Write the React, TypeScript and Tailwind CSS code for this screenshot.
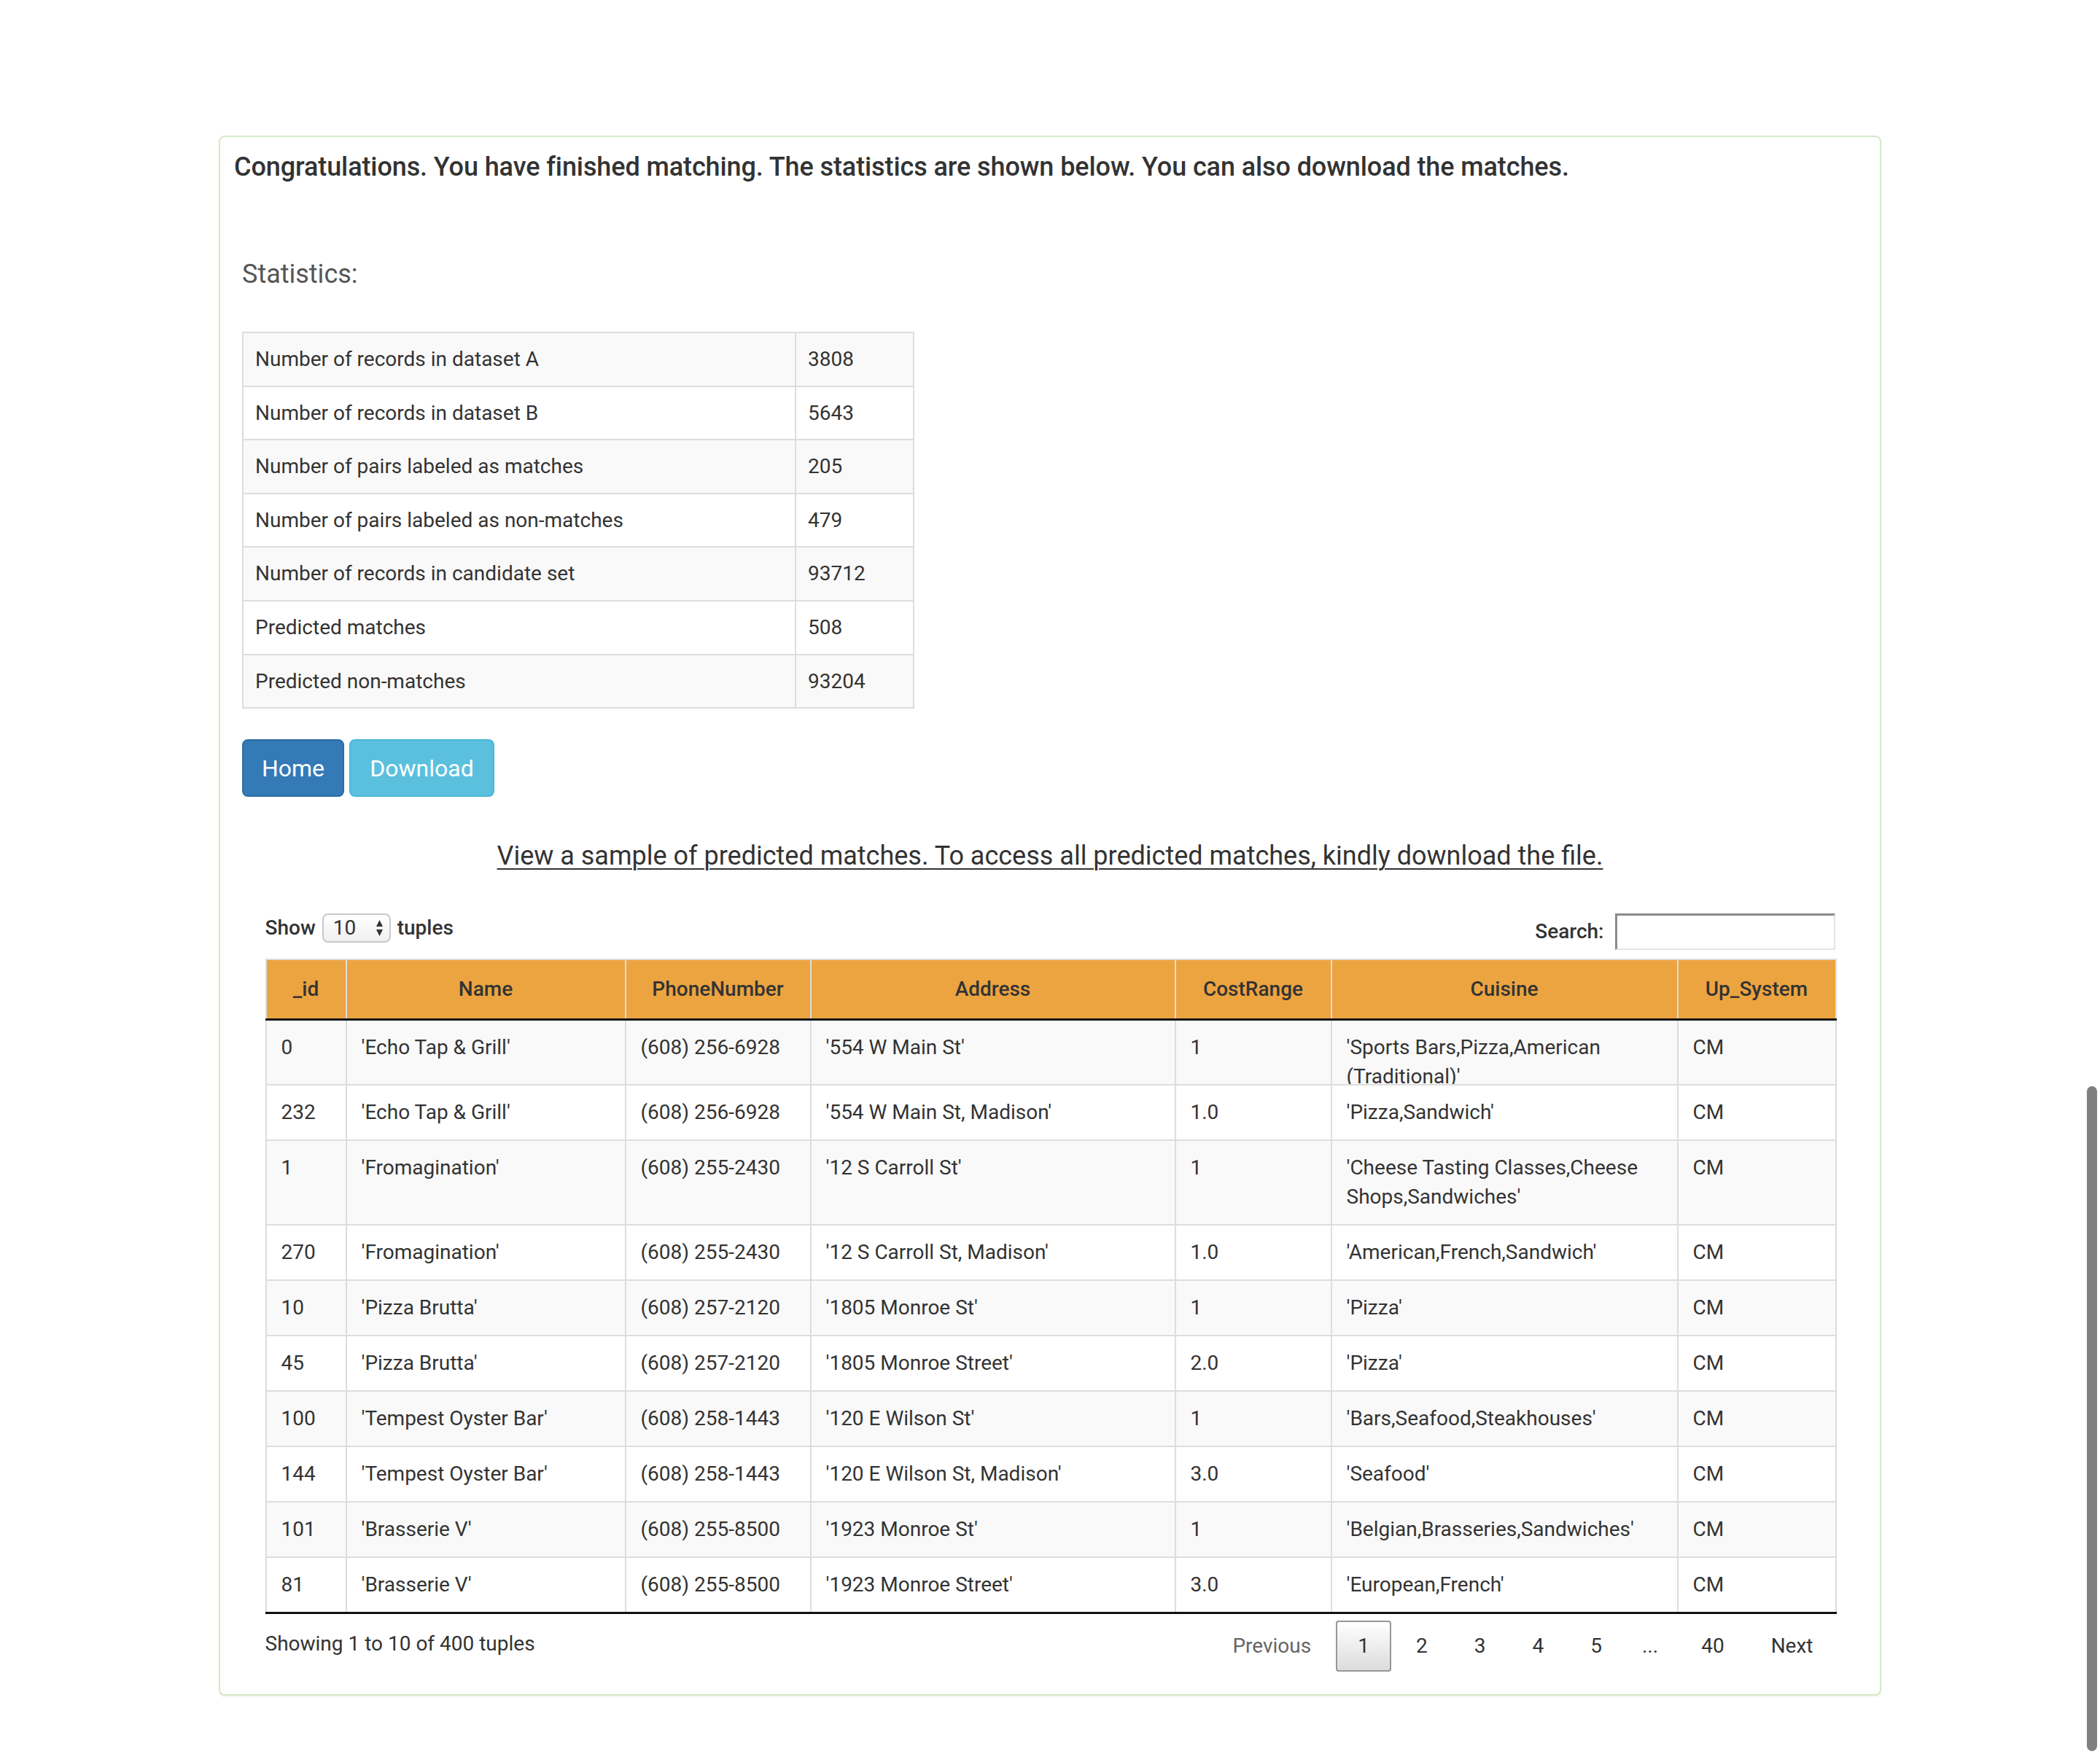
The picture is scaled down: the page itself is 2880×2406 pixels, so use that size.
import React from "react";

const stats: [string, string][] = [
  ["Number of records in dataset A", "3808"],
  ["Number of records in dataset B", "5643"],
  ["Number of pairs labeled as matches", "205"],
  ["Number of pairs labeled as non-matches", "479"],
  ["Number of records in candidate set", "93712"],
  ["Predicted matches", "508"],
  ["Predicted non-matches", "93204"],
];

const rows: string[][] = [
  ["0", "'Echo Tap & Grill'", "(608) 256-6928", "'554 W Main St'", "1", "'Sports Bars,Pizza,American (Traditional)'", "CM"],
  ["232", "'Echo Tap & Grill'", "(608) 256-6928", "'554 W Main St, Madison'", "1.0", "'Pizza,Sandwich'", "CM"],
  ["1", "'Fromagination'", "(608) 255-2430", "'12 S Carroll St'", "1", "'Cheese Tasting Classes,Cheese Shops,Sandwiches'", "CM"],
  ["270", "'Fromagination'", "(608) 255-2430", "'12 S Carroll St, Madison'", "1.0", "'American,French,Sandwich'", "CM"],
  ["10", "'Pizza Brutta'", "(608) 257-2120", "'1805 Monroe St'", "1", "'Pizza'", "CM"],
  ["45", "'Pizza Brutta'", "(608) 257-2120", "'1805 Monroe Street'", "2.0", "'Pizza'", "CM"],
  ["100", "'Tempest Oyster Bar'", "(608) 258-1443", "'120 E Wilson St'", "1", "'Bars,Seafood,Steakhouses'", "CM"],
  ["144", "'Tempest Oyster Bar'", "(608) 258-1443", "'120 E Wilson St, Madison'", "3.0", "'Seafood'", "CM"],
  ["101", "'Brasserie V'", "(608) 255-8500", "'1923 Monroe St'", "1", "'Belgian,Brasseries,Sandwiches'", "CM"],
  ["81", "'Brasserie V'", "(608) 255-8500", "'1923 Monroe Street'", "3.0", "'European,French'", "CM"],
];

const headers = ["_id", "Name", "PhoneNumber", "Address", "CostRange", "Cuisine", "Up_System"];
const widths = [110, 383, 254, 500, 214, 475, 217];

export default function App() {
  return (
    <div className="relative min-h-[2406px] bg-white font-['Roboto','Liberation_Sans',sans-serif] text-[#333]">
      <div className="w-[2280px] mx-auto pt-[186px]">
        <div className="border-2 border-[#d6e9c6] rounded-[8px] shadow-[0_2px_2px_rgba(0,0,0,0.05)] bg-white">
          <h4 className="mt-[21px] pl-[19px] text-[36px] leading-[40px] font-medium tracking-[-0.1px]">
            Congratulations. You have finished matching. The statistics are shown below. You can also download the matches.
          </h4>
          <div className="px-[30px] pb-[31px]">
            <div className="mt-[107px] text-[36px] leading-[40px] text-[#555]">Statistics:</div>
            <table className="mt-[59px] w-[920px] border-collapse text-[28px] leading-[39.6px] table-fixed">
              <colgroup>
                <col style={{ width: "758px" }} />
                <col style={{ width: "162px" }} />
              </colgroup>
              <tbody>
                {stats.map(([k, v], i) => (
                  <tr key={k} className={i % 2 === 0 ? "bg-[#f9f9f9]" : "bg-white"}>
                    <td className="border-2 border-[#ddd] p-[16px] text-left">{k}</td>
                    <td className="border-2 border-[#ddd] p-[16px] text-left">{v}</td>
                  </tr>
                ))}
              </tbody>
            </table>

            <div className="mt-[42px] flex">
              <button className="w-[140px] h-[79px] flex items-center justify-center rounded-[8px] border-2 border-[#2e6da4] bg-[#337ab7] text-white text-[32px] leading-[46px]">
                Home
              </button>
              <button className="ml-[7px] w-[199px] h-[79px] flex items-center justify-center rounded-[8px] border-2 border-[#46b8da] bg-[#5bc0de] text-white text-[32px] leading-[46px]">
                Download
              </button>
            </div>

            <div className="mt-[61px] text-center text-[36px] leading-[40px]">
              <a className="underline decoration-[2px] underline-offset-[5px] text-[#333]">
                View a sample of predicted matches. To access all predicted matches, kindly download the file.
              </a>
            </div>

            <div className="mt-[59px] w-[2153px] mx-auto text-[28px]">
              <div className="flex justify-between items-start h-[50px]">
                <div className="flex items-center h-[40px] leading-[40px] font-medium">
                  <span>Show</span>
                  <div className="mx-[9px] flex items-center justify-between w-[94px] h-[40px] pl-[13px] pr-[8px] border-2 border-[#c9c9c9] rounded-[8px] bg-linear-to-b from-white to-[#f0f0f0] font-normal">
                    <span>10</span>
                    <svg width="11" height="26" viewBox="0 0 11 26">
                      <path d="M5.5 2 L10 11 H1 Z" fill="#333" />
                      <path d="M5.5 24 L10 15 H1 Z" fill="#333" />
                    </svg>
                  </div>
                  <span>tuples</span>
                </div>
                <div className="flex items-center h-[50px] leading-[40px] font-medium">
                  <span>Search:</span>
                  <div className="ml-[15px] w-[302px] h-[50px] border-t-[3px] border-l-[3px] border-r-2 border-b-2 border-t-[#8a8a8a] border-l-[#8a8a8a] border-r-[#e3e3e3] border-b-[#e3e3e3] bg-white" />
                </div>
              </div>

              <table className="mt-[12px] w-[2153px] border-collapse table-fixed text-[28px] leading-[40px]">
                <colgroup>
                  {widths.map((w, i) => (
                    <col key={i} style={{ width: `${w}px` }} />
                  ))}
                </colgroup>
                <thead>
                  <tr className="bg-[#eca440]">
                    {headers.map((h) => (
                      <th
                        key={h}
                        className="border-2 border-[#ddd] border-b-[3px] border-b-[#111] px-[20px] py-[20px] text-center font-medium"
                      >
                        {h}
                      </th>
                    ))}
                  </tr>
                </thead>
                <tbody>
                  {rows.map((r, i) => (
                    <tr key={i} className={i % 2 === 0 ? "bg-[#f9f9f9]" : "bg-white"}>
                      {r.map((c, j) => (
                        <td
                          key={j}
                          className={`border-2 border-[#ddd] px-[20px] align-top text-left ${
                            i === 0 ? "pt-[17px] pb-0" : "py-[17px]"
                          } ${i === rows.length - 1 ? "border-b-[3px] border-b-[#111]" : ""}`}
                        >
                          {i === 0 ? <div className="h-[70px] overflow-hidden">{c}</div> : c}
                        </td>
                      ))}
                    </tr>
                  ))}
                </tbody>
              </table>

              <div className="flex justify-between items-start">
                <div className="pt-[21px] leading-[40px]">Showing 1 to 10 of 400 tuples</div>
                <div className="pt-[9px] flex items-center leading-[40px]">
                  <span className="ml-[4px] px-[28px] py-[13px] border-2 border-transparent text-[#666]">Previous</span>
                  <span className="ml-[4px] px-[28px] py-[13px] border-2 border-[#979797] rounded-[4px] bg-linear-to-b from-white to-[#dcdcdc]">1</span>
                  <span className="ml-[4px] px-[28px] py-[13px] border-2 border-transparent">2</span>
                  <span className="ml-[4px] px-[28px] py-[13px] border-2 border-transparent">3</span>
                  <span className="ml-[4px] px-[28px] py-[13px] border-2 border-transparent">4</span>
                  <span className="ml-[4px] px-[28px] py-[13px] border-2 border-transparent">5</span>
                  <span className="px-[25px]">...</span>
                  <span className="ml-[4px] px-[28px] py-[13px] border-2 border-transparent">40</span>
                  <span className="ml-[4px] px-[28px] py-[13px] border-2 border-transparent">Next</span>
                </div>
              </div>
            </div>
          </div>
        </div>
      </div>
      <div className="absolute right-[4px] top-[1490px] w-[14px] h-[912px] rounded-full bg-[#7f7f7f]" />
    </div>
  );
}
